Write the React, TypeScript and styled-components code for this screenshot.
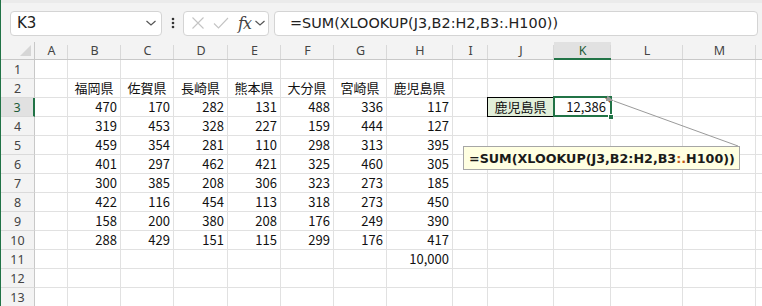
import React from 'react';
import styled, { createGlobalStyle, css } from 'styled-components';

const Global = createGlobalStyle`
  html, body { margin: 0; padding: 0; background: #ffffff; }
  body { font-family: "Noto Sans CJK JP", "Noto Sans", sans-serif; }
  * { box-sizing: border-box; }
`;

const GREEN = '#217346';

const Window = styled.div`
  position: relative;
  width: 762px;
  height: 306px;
  overflow: hidden;
  background: #ffffff;
  border-left: 1px solid ${GREEN};
`;

const Toolbar = styled.div`
  height: 42px;
  display: flex;
  align-items: center;
  padding: 1px 4px 0 9px;
  background: #f3f3f3;
  border-top: 3px solid #ebebeb;
  font-family: "DejaVu Sans", sans-serif;
`;

const Box = styled.div<{ $w?: number; $grow?: boolean }>`
  height: 25px;
  ${(p) => (p.$w ? `width: ${p.$w}px;` : '')}
  ${(p) => (p.$grow ? 'flex: 1;' : '')}
  display: flex;
  align-items: center;
  background: #ffffff;
  border: 1px solid #d4d4d4;
  border-radius: 4px;
`;

const NameText = styled.span`
  flex: 1;
  padding-left: 6px;
  font-size: 15px;
  color: #222;
`;

const DotsSlot = styled.div`
  width: 21px;
  display: flex;
  justify-content: center;
`;

const FuncIcons = styled.div`
  display: flex;
  align-items: center;
  padding-left: 7px;
`;

const Fx = styled.span`
  font-family: "DejaVu Serif", "Liberation Serif", serif;
  font-style: italic;
  font-size: 16px;
  color: #444;
  margin-left: 9px;
  letter-spacing: -1px;
`;

const FormulaText = styled.span`
  padding-left: 15px;
  font-size: 14.4px;
  color: #222;
  white-space: nowrap;
`;

const Spacer = styled.div<{ $w: number }>`
  width: ${(p) => p.$w}px;
  flex: none;
`;

const Sheet = styled.div<{ $cols: string }>`
  display: grid;
  grid-template-columns: ${(p) => p.$cols};
  grid-template-rows: 18px;
  grid-auto-rows: 19px;
`;

const Corner = styled.div`
  position: relative;
  background: #f3f3f3;
  border-right: 1px solid #c8c8c8;
  border-bottom: 1px solid #c8c8c8;
  &::after {
    content: '';
    position: absolute;
    right: 3px;
    bottom: 3px;
    width: 0;
    height: 0;
    border-left: 11px solid transparent;
    border-bottom: 11px solid #d6d6d6;
  }
`;

const ColHeader = styled.div<{ $sel?: boolean }>`
  position: relative;
  display: flex;
  align-items: center;
  justify-content: center;
  background: ${(p) => (p.$sel ? '#e1e1e1' : '#f3f3f3')};
  border-bottom: ${(p) => (p.$sel ? `2px solid ${GREEN}` : '1px solid #c8c8c8')};
  font-family: "Noto Sans", sans-serif;
  font-size: 12.5px;
  color: ${(p) => (p.$sel ? '#1d5c38' : '#444')};
  &::after {
    content: '';
    position: absolute;
    right: 0;
    top: 3px;
    bottom: 0;
    width: 1px;
    background: #d8d8d8;
  }
`;

const RowHeader = styled.div<{ $sel?: boolean }>`
  display: flex;
  align-items: center;
  justify-content: center;
  background: ${(p) => (p.$sel ? '#e1e1e1' : '#f3f3f3')};
  border-right: ${(p) => (p.$sel ? `2px solid ${GREEN}` : '1px solid #c8c8c8')};
  border-bottom: 1px solid #dadada;
  font-family: "Noto Sans", sans-serif;
  font-size: 12.5px;
  color: ${(p) => (p.$sel ? '#1d5c38' : '#444')};
  padding-top: 1px;
`;

const Cell = styled.div<{ $align?: 'left' | 'right' | 'center'; $label?: boolean; $active?: boolean }>`
  position: relative;
  display: flex;
  align-items: center;
  justify-content: ${(p) => (p.$align === 'right' ? 'flex-end' : p.$align === 'center' ? 'center' : 'flex-start')};
  padding: 0 3px;
  border-right: 1px solid #e1e1e1;
  border-bottom: 1px solid #e1e1e1;
  font-size: 13px;
  line-height: 18px;
  color: #111;
  white-space: nowrap;
  ${(p) =>
    p.$label &&
    css`
      background: #e2efda;
      z-index: 1;
      &::after {
        content: '';
        position: absolute;
        top: -1px;
        left: -1px;
        right: -1px;
        bottom: -1px;
        border: 1px solid #000;
      }
    `}
  ${(p) =>
    p.$active &&
    css`
      z-index: 2;
      padding-right: 4px;
      &::after {
        content: '';
        position: absolute;
        top: -2px;
        left: -1px;
        right: -2px;
        bottom: -1px;
        border: 2px solid ${GREEN};
      }
    `}
`;

const FillHandle = styled.span`
  position: absolute;
  right: -4px;
  bottom: -4px;
  width: 6px;
  height: 6px;
  background: ${GREEN};
  border: 1px solid #ffffff;
  z-index: 3;
`;

const ErrorMark = styled.span`
  position: absolute;
  top: 0;
  right: 0;
  width: 0;
  height: 0;
  border-left: 5px solid transparent;
  border-top: 5px solid #b4541d;
  z-index: 3;
`;

const Tip = styled.div`
  position: absolute;
  left: 462px;
  top: 146px;
  width: 277px;
  height: 24px;
  display: flex;
  align-items: center;
  padding-left: 5px;
  background: #ffffe1;
  border: 1px solid #a6a6a6;
  font-family: "DejaVu Sans", sans-serif;
  font-weight: bold;
  font-size: 12.7px;
  color: #1a1a1a;
  white-space: nowrap;
  z-index: 5;
`;

const Accent = styled.span`
  color: #c55a11;
`;

const Arrow = styled.svg`
  position: absolute;
  left: 0;
  top: 0;
  z-index: 4;
  pointer-events: none;
`;

const COLS = [
  { k: 'A', w: 33 },
  { k: 'B', w: 53 },
  { k: 'C', w: 53 },
  { k: 'D', w: 54 },
  { k: 'E', w: 53 },
  { k: 'F', w: 53 },
  { k: 'G', w: 53 },
  { k: 'H', w: 66 },
  { k: 'I', w: 35 },
  { k: 'J', w: 66 },
  { k: 'K', w: 57 },
  { k: 'L', w: 72 },
  { k: 'M', w: 73 },
  { k: '', w: 60 },
];

const PREFS = ['福岡県', '佐賀県', '長崎県', '熊本県', '大分県', '宮崎県', '鹿児島県'];
const DATA = [
  [470, 170, 282, 131, 488, 336, 117],
  [319, 453, 328, 227, 159, 444, 127],
  [459, 354, 281, 110, 298, 313, 395],
  [401, 297, 462, 421, 325, 460, 305],
  [300, 385, 208, 306, 323, 273, 185],
  [422, 116, 454, 113, 318, 273, 450],
  [158, 200, 380, 208, 176, 249, 390],
  [288, 429, 151, 115, 299, 176, 417],
];

type CellSpec = { text?: string; align?: 'left' | 'right' | 'center'; label?: boolean; active?: boolean };

function buildRow(r: number): CellSpec[] {
  const row: CellSpec[] = COLS.map(() => ({}));
  if (r === 2) {
    PREFS.forEach((p, i) => (row[i + 1] = { text: p, align: 'center' }));
  }
  if (r >= 3 && r <= 10) {
    DATA[r - 3].forEach((v, i) => (row[i + 1] = { text: String(v), align: 'right' }));
  }
  if (r === 3) {
    row[9] = { text: '鹿児島県', align: 'center', label: true };
    row[10] = { text: '12,386', align: 'right', active: true };
  }
  if (r === 11) {
    row[7] = { text: '10,000', align: 'right' };
  }
  return row;
}

const Chevron = () => (
  <svg width="12" height="8" viewBox="0 0 12 8">
    <polyline points="1.5,2 6,6 10.5,2" fill="none" stroke="#555" strokeWidth="1.2" />
  </svg>
);

export default function App() {
  const cols = `34px ${COLS.map((c) => `${c.w}px`).join(' ')}`;
  const rows = Array.from({ length: 13 }, (_, i) => i + 1);
  return (
    <>
      <Global />
      <Window>
        <Toolbar>
          <Box $w={152}>
            <NameText>K3</NameText>
            <Chevron />
            <Spacer $w={4} />
          </Box>
          <DotsSlot>
            <svg width="4" height="12" viewBox="0 0 4 12">
              <circle cx="2" cy="2" r="1.3" fill="#333" />
              <circle cx="2" cy="6" r="1.3" fill="#333" />
              <circle cx="2" cy="10" r="1.3" fill="#333" />
            </svg>
          </DotsSlot>
          <Box $w={86}>
            <FuncIcons>
              <svg width="14" height="14" viewBox="0 0 14 14">
                <path d="M1.5 1.5 L12.5 12.5 M12.5 1.5 L1.5 12.5" stroke="#c4c4c4" strokeWidth="1.1" fill="none" />
              </svg>
              <Spacer $w={8} />
              <svg width="16" height="14" viewBox="0 0 16 14">
                <path d="M1 7.5 L5.5 12 L15 2" stroke="#c4c4c4" strokeWidth="1.1" fill="none" />
              </svg>
              <Fx>fx</Fx>
              <Spacer $w={3} />
              <Chevron />
            </FuncIcons>
          </Box>
          <Spacer $w={5} />
          <Box $grow>
            <FormulaText>=SUM(XLOOKUP(J3,B2:H2,B3:.H100))</FormulaText>
          </Box>
        </Toolbar>
        <Sheet $cols={cols}>
          <Corner />
          {COLS.map((c, i) => (
            <ColHeader key={i} $sel={c.k === 'K'}>
              {c.k}
            </ColHeader>
          ))}
          {rows.map((r) => (
            <React.Fragment key={r}>
              <RowHeader $sel={r === 3}>{r}</RowHeader>
              {buildRow(r).map((cell, i) => (
                <Cell key={i} $align={cell.align} $label={cell.label} $active={cell.active}>
                  {cell.text}
                  {cell.active && <ErrorMark />}
                  {cell.active && <FillHandle />}
                </Cell>
              ))}
            </React.Fragment>
          ))}
        </Sheet>
        <Arrow width="762" height="306" viewBox="0 0 762 306">
          <defs>
            <marker id="ah" markerWidth="8" markerHeight="6" refX="0" refY="3" orient="auto" markerUnits="userSpaceOnUse">
              <path d="M0 3 L8 0 L8 6 Z" fill="#9a9a9a" />
            </marker>
          </defs>
          <line x1="737" y1="146" x2="613" y2="101" stroke="#9a9a9a" strokeWidth="1" markerEnd="url(#ah)" />
        </Arrow>
        <Tip>
          =SUM(XLOOKUP(J3,B2:H2,B3<Accent>:.</Accent>H100))
        </Tip>
      </Window>
    </>
  );
}
